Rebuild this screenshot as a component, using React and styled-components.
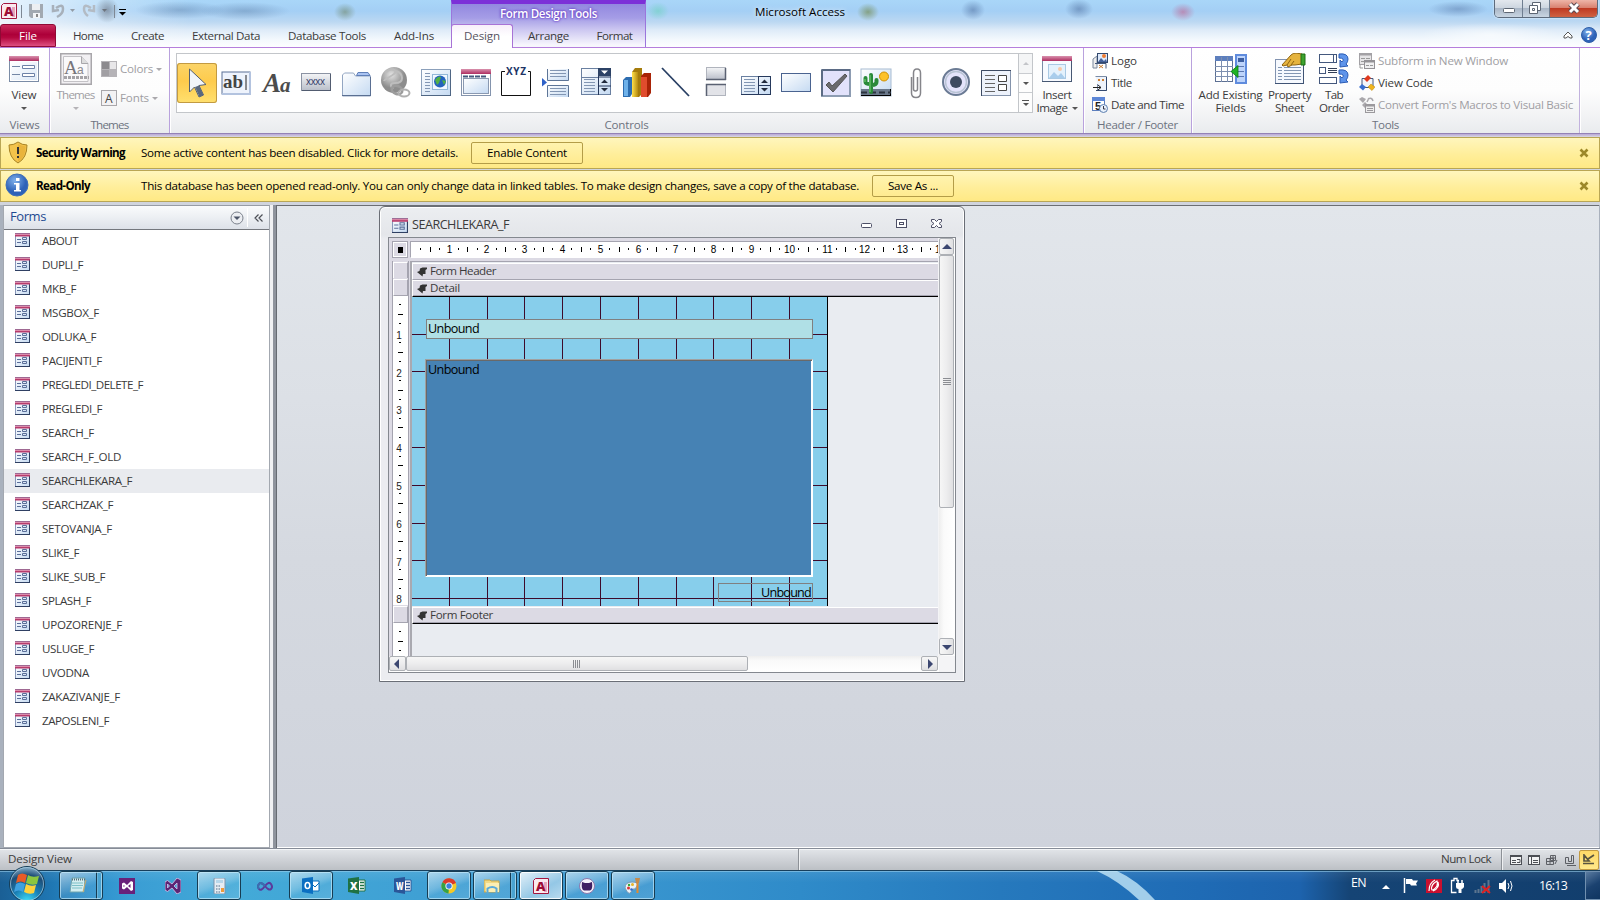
import React, { useLayoutEffect, useRef, useState } from "react";
import styled, { createGlobalStyle, css } from "styled-components";

const Global = createGlobalStyle`
  * { box-sizing: border-box; }
  body { margin: 0; overflow: hidden; }
  svg { display: block; flex: none; }
`;

const ui = css`
  font-family: "Open Sans", "Noto Sans", sans-serif;
  font-size: 11.6px;
  line-height: 13px;
`;

const Screen = styled.div`
  ${ui}
  width: 1600px;
  height: 900px;
  display: flex;
  flex-direction: column;
  overflow: hidden;
  color: #3b3b3b;
  background: #d0d4dd;
`;

/* Text set to a given measure by spreading the difference over its letters */
const FitSpan = styled.span`
  display: inline-block;
  vertical-align: top;
  white-space: pre;
  flex: none;
  line-height: 11px;
  padding-bottom: 2px;
`;
function Fit({ w, children }) {
  const ref = useRef(null);
  const [ls, setLs] = useState(0);
  useLayoutEffect(() => {
    const natural = ref.current.getBoundingClientRect().width;
    setLs((w - natural) / children.length);
  }, [w, children]);
  return (
    <FitSpan ref={ref} style={{ letterSpacing: ls }}>
      {children}
    </FitSpan>
  );
}

/* ---------- title bar and tabs ---------- */
const TopArea = styled.header`
  position: relative;
  height: 48px;
  flex: none;
  border-bottom: 1px solid #b57fdc;
  background:
    radial-gradient(ellipse 70px 12px at 1490px 35px, rgba(255,255,255,.6), transparent),
    radial-gradient(ellipse 11px 9px at 345px 12px, rgba(100,120,80,.5), transparent),
    radial-gradient(ellipse 45px 9px at 180px 10px, rgba(60,90,130,.3), transparent),
    radial-gradient(ellipse 45px 9px at 245px 11px, rgba(60,90,130,.3), transparent),
    radial-gradient(ellipse 11px 9px at 658px 11px, rgba(110,210,190,.6), transparent),
    radial-gradient(ellipse 11px 9px at 868px 12px, rgba(110,130,60,.6), transparent),
    radial-gradient(ellipse 12px 10px at 973px 10px, rgba(60,90,140,.45), transparent),
    radial-gradient(ellipse 14px 10px at 1079px 9px, rgba(60,90,140,.45), transparent),
    radial-gradient(ellipse 12px 9px at 1183px 12px, rgba(200,60,110,.45), transparent),
    radial-gradient(ellipse 30px 8px at 1458px 9px, rgba(70,100,150,.4), transparent),
    linear-gradient(90deg, rgba(255,255,255,.75) 0, rgba(255,255,255,.35) 90px, transparent 190px),
    linear-gradient(#a9d6f8 0, #a4cff5 11px, #bcd8f2 22px, #deebf8 30px, #f4f9fd 40px, #fdfeff 47px);
`;
const TitleRow = styled.div`
  height: 24px;
  display: flex;
  align-items: flex-start;
  justify-content: space-between;
`;
const QuickBar = styled.div`
  display: flex;
  padding-left: 1px;
`;
const AppTitle = styled.div`
  position: absolute;
  left: 755px;
  top: 6px;
  color: #000;
  text-shadow: 0 0 5px #fff;
`;
const WindowButtons = styled.div`
  display: flex;
  width: 104px;
  height: 18px;
  margin-right: 2px;
  border: 1px solid #5d6b7c;
  border-top: 0;
  border-radius: 0 0 5px 5px;
  overflow: hidden;
  box-shadow: 0 0 2px #fff;
`;
const WinBtn = styled.div`
  width: ${(p) => p.$w}px;
  border-right: 1px solid #6f7e90;
  background: linear-gradient(#e3e8ee, #ccd5df 48%, #aab7c7 50%, #c9d5e2);
  ${(p) => p.$close && css`border: 0; background: linear-gradient(#eeb5a8, #d98270 45%, #bf3a22 50%, #cf6242);`}
`;
const TabRow = styled.nav`
  display: flex;
  height: 24px;
  position: relative;
`;
const Tab = styled.div`
  width: ${(p) => p.$w}px;
  display: flex;
  justify-content: center;
  padding-top: 6px;
  color: #3b3b3b;
  ${(p) => p.$file && css`
    color: #fff;
    height: 23px;
    border: 1px solid #8f0a35;
    border-radius: 3px 3px 0 0;
    padding-top: 5px;
    background: linear-gradient(#c92a5c, #ad0039 45%, #b4083f 60%, #de4f80);
  `}
  ${(p) => p.$active && css`
    border: 1px solid #a873d6;
    border-bottom: 0;
    border-radius: 3px 3px 0 0;
    padding-top: 5px;
    color: #595463;
    background: linear-gradient(#f7effa, #fff 50%);
  `}
`;
const ContextBand = styled.div`
  position: absolute;
  left: 451px;
  top: 0;
  width: 195px;
  height: 47px;
  display: flex;
  justify-content: center;
  padding-top: 4px;
  border-top: 4px solid #7c30d8;
  border-left: 1px solid #9b76dc;
  border-right: 1px solid #9b76dc;
  color: #fff;
  font-weight: 600;
  text-shadow: 0 0 3px #5b2fc0, 0 0 2px #7040c8;
  background: linear-gradient(#9288df, #a59de6 14px, #cdc8f1 26px, #f7f6fd 41px);
`;
const TabTools = styled.div`
  margin-left: auto;
  display: flex;
  gap: 8px;
  padding: 3px 3px 0 0;
`;

/* ---------- ribbon ---------- */
const Ribbon = styled.section`
  height: 85px;
  flex: none;
  display: flex;
  background: linear-gradient(#fff, #fdfdfd 50%, #f0f1f3 85%, #e9ebee);
`;
const RibbonEdge = styled.div`
  height: 4px;
  flex: none;
  background: linear-gradient(#9382b6 0, #9382b6 1px, #b9a8d8 1px, #cdc6dc 3px, #dcdce4);
`;
const Group = styled.div`
  width: ${(p) => p.$w}px;
  display: flex;
  flex-direction: column;
  border-right: 1px solid #b9a2dd;
  box-shadow: 1px 0 0 #fff;
  ${(p) => p.$last && css`border-right-color: #c2b2de;`}
`;
const GroupBody = styled.div`
  height: 71px;
  display: flex;
  padding-left: ${(p) => p.$pad || 0}px;
`;
const GroupName = styled.div`
  display: flex;
  justify-content: center;
  color: #6d7380;
`;
const BigButton = styled.div`
  width: ${(p) => p.$w}px;
  display: flex;
  flex-direction: column;
  align-items: center;
  padding-top: ${(p) => p.$top ?? 7}px;
  color: ${(p) => (p.$off ? "#a09ea3" : "#3b3b3b")};
`;
const BigText = styled.div`
  display: flex;
  align-items: center;
  flex-direction: column;
  margin-top: ${(p) => p.$mt ?? 6}px;
`;
const Line = styled.div`
  display: flex;
  align-items: center;
  gap: 4px;
`;
const Caret = styled.i`
  width: 0;
  height: 0;
  margin-top: ${(p) => p.$mt || 0}px;
  border: 3px solid transparent;
  border-bottom: 0;
  border-top-color: ${(p) => p.$c || "#555"};
`;
const SmallList = styled.div`
  display: flex;
  flex-direction: column;
  padding: ${(p) => p.$pad};
  gap: ${(p) => p.$gap}px;
`;
const SmallItem = styled.div`
  height: 16px;
  display: flex;
  align-items: center;
  gap: 3px;
  color: ${(p) => (p.$off ? "#a09ea3" : "#3b3b3b")};
`;
const Gallery = styled.div`
  width: 857px;
  height: 60px;
  margin-top: 5px;
  display: flex;
  border: 1px solid #c3c6ca;
  background: #fff;
`;
const GalleryCell = styled.div`
  width: 40px;
  height: 40px;
  margin-top: 9px;
  flex: none;
  ${(p) => p.$on && css`
    border-radius: 3px;
    box-shadow: inset 0 0 0 1px #c29a42;
    background: linear-gradient(#fbd469, #fecb4c 45%, #ffe06f);
  `}
`;
const GalleryScroll = styled.div`
  margin-left: auto;
  width: 14px;
  display: flex;
  flex-direction: column;
  border-left: 1px solid #c3c6ca;
`;
const ScrollStep = styled.div`
  flex: 1;
  display: flex;
  flex-direction: column;
  align-items: center;
  justify-content: center;
  gap: 2px;
  border-bottom: 1px solid #c9ccd0;
  background: ${(p) => (p.$off ? "#f4f5f6" : "#fdfdfd")};
  &:last-child { border-bottom: 0; }
`;
const Bar = styled.i`
  width: 7px;
  height: 1px;
  background: #555;
`;

/* ---------- message bars ---------- */
const Message = styled.div`
  height: 32px;
  flex: none;
  display: flex;
  align-items: center;
  margin-bottom: ${(p) => p.$mb}px;
  padding-right: 10px;
  color: #000;
  border: 1px solid #b9a654;
  background: linear-gradient(#fff6bd, #ffee9a 55%, #ffe985);
`;
const MessageIcon = styled.div`
  width: 35px;
  padding-left: 4px;
`;
const MessageTitle = styled.div`
  width: 105px;
  font-weight: 700;
`;
const MessageButton = styled.div`
  height: 22px;
  width: ${(p) => p.$w}px;
  margin-left: 13px;
  display: flex;
  align-items: center;
  justify-content: center;
  border: 1px solid #b49d48;
  border-radius: 2px;
  background: linear-gradient(#fff3ae, #ffeb90);
`;
const Dismiss = styled.div`
  margin-left: auto;
`;

/* ---------- work area ---------- */
const Work = styled.main`
  height: 643px;
  flex: none;
  display: flex;
  background: #a9b1bd;
`;
const NavPane = styled.aside`
  width: 267px;
  margin-left: 3px;
  display: flex;
  flex-direction: column;
  border: 1px solid #a3a8b0;
  border-top-color: #979ca5;
  background: #fff;
`;
const NavHead = styled.div`
  height: 24px;
  flex: none;
  display: flex;
  align-items: center;
  padding: 0 5px 0 6px;
  font-size: 13px;
  color: #1e4a91;
  border-bottom: 1px solid #74777d;
  background: linear-gradient(#fafbfc, #eceff3 50%, #dde1e8);
`;
const HeadTools = styled.div`
  margin-left: auto;
  display: flex;
  align-items: center;
`;
const HeadRule = styled.i`
  width: 1px;
  height: 19px;
  margin: 0 6px 0 3px;
  background: #fff;
`;
const NavList = styled.div`
  display: flex;
  flex-direction: column;
`;
const NavRow = styled.div`
  height: 24px;
  flex: none;
  display: flex;
  align-items: center;
  gap: 12px;
  padding-left: 11px;
  background: ${(p) => (p.$on ? "#e9ebef" : "transparent")};
  svg { margin-bottom: 3px; }
  &:first-child { height: 23px; }
`;
const Splitter = styled.div`
  width: 7px;
  border-right: 1px solid #666b72;
  background: linear-gradient(90deg, #f0f1f3 3px, #8f949d 3px);
`;
const Canvas = styled.div`
  position: relative;
  width: 1322px;
  border-top: 1px solid #6b6e73;
  border-bottom: 1px solid #fff;
  background: linear-gradient(#e2e6eb, #dce0e6 30%, #d5d9e0 55%, #cfd3dc);
`;
const FormWindow = styled.div`
  position: absolute;
  left: 102px;
  top: 0;
  width: 586px;
  height: 476px;
  border: 1px solid #6a6e76;
  border-radius: 6px 6px 0 0;
  padding: 0 8px 8px;
  display: flex;
  flex-direction: column;
  box-shadow: inset 0 0 0 1px #fff;
  background: linear-gradient(#eceef1, #e4e6ea 28px, #ebecf0 32px);
`;
const FormTitle = styled.div`
  height: 30px;
  flex: none;
  display: flex;
  align-items: center;
  gap: 4px;
  padding: 6px 13px 0 4px;
  font-size: 12.6px;
`;
const FormButtons = styled.div`
  margin-left: auto;
  margin-top: -2px;
`;
const Frame = styled.div`
  width: 568px;
  height: 436px;
  border: 1px solid #84888f;
  display: grid;
  grid-template-columns: 550px 16px;
  grid-template-rows: 418px 16px;
  background: #f4f4f6;
`;
const Designer = styled.div`
  display: grid;
  overflow: hidden;
  margin-right: 1px;
  grid-template-columns: 23px 526px;
  grid-template-rows: 23px 395px;
  background: #dcdae4;
`;
const Corner = styled.div`
  margin: 3px 0 3px 3px;
  width: 16px;
  height: 17px;
  padding: 5px 0 0 5px;
  border: 1px solid #a5a4b0;
  box-shadow: inset 0 0 0 1px #fff;
`;
const CornerDot = styled.i`
  display: block;
  width: 5px;
  height: 6px;
  background: #000;
`;
const RulerTop = styled.div`
  margin: 3px 0 3px -2px;
  height: 17px;
  border: 1px solid #a5a4b0;
  border-bottom-color: #fff;
  border-right: 0;
  background: #fff;
  overflow: hidden;
`;
const RulerSide = styled.div`
  display: flex;
  flex-direction: column;
  margin-left: 3px;
  margin-right: 3px;
  border: solid #a5a4b0;
  border-width: 1px 1px 0 1px;
  background: #fff;
`;
const SectionStub = styled.div`
  height: 17px;
  flex: none;
  border: 1px solid #fff;
  border-right-color: #a5a4b0;
  border-bottom-color: #a5a4b0;
  box-shadow: 0 -1px 0 #dcdae4;
  background: #dcdae4;
`;
const Sections = styled.div`
  border-top: 1px solid #a5a4b0;
  border-left: 2px solid #a9a9b0;
  margin-left: -2px;
  display: flex;
  flex-direction: column;
  background: #e9ecf1;
`;
const SectionBar = styled.div`
  height: 17px;
  flex: none;
  display: flex;
  align-items: center;
  gap: 3px;
  padding-left: 4px;
  border-top: 1px solid #fff;
  border-left: 1px solid #fff;
  border-bottom: 1px solid ${(p) => (p.$open ? "#000" : "#a5a4b0")};
  box-shadow: ${(p) => (p.$open ? "inset 0 -1px 0 #a5a4b0" : "none")};
  margin-top: ${(p) => p.$mt || 0}px;
  background: #dcdae4;
`;
const Detail = styled.div`
  position: relative;
  width: 416px;
  height: 309px;
  flex: none;
  border-right: 1px solid #000;
  background: #87ceeb;
`;
const Control = styled.div`
  position: absolute;
  left: ${(p) => p.$x}px;
  top: ${(p) => p.$y}px;
  width: ${(p) => p.$w}px;
  height: ${(p) => p.$h}px;
  padding: 3px 1px 0;
  font-size: 12.6px;
  color: #000;
  text-align: ${(p) => (p.$right ? "right" : "left")};
  border: 1px solid #808080;
  background: ${(p) => p.$bg || "transparent"};
  ${(p) => p.$sunken && css`
    border: 1px solid;
    border-color: #a0a0a0 #fff #fff #a0a0a0;
    box-shadow: inset 1px 1px 0 #696969, inset -1px -1px 0 #fff;
    padding: 4px 2px 0;
  `}
`;
const VScroll = styled.div`
  display: flex;
  flex-direction: column;
  padding-bottom: 1px;
  background: linear-gradient(90deg, #eee, #fafafa 30%, #fff);
`;
const HScroll = styled.div`
  display: flex;
  padding-right: 1px;
  background: linear-gradient(#eee, #fafafa 30%, #fff);
`;
const ScrollPiece = styled.div`
  width: ${(p) => p.$w}px;
  height: ${(p) => p.$h}px;
  flex: none;
  display: flex;
  align-items: center;
  justify-content: center;
  border: 1px solid #adb0b5;
  border-radius: 2px;
  background: linear-gradient(${(p) => (p.$v ? "90deg" : "180deg")}, #f6f6f6, #ededee 50%, #e0e0e2);
  ${(p) => p.$end && css`margin-top: auto;`}
  ${(p) => p.$endx && css`margin-left: auto;`}
`;

/* ---------- status bar ---------- */
const Status = styled.footer`
  height: 22px;
  flex: none;
  display: flex;
  align-items: center;
  padding: 0 1px 0 8px;
  border-top: 1px solid #868c97;
  box-shadow: inset 0 1px 0 #f4f6f8;
  background: linear-gradient(#e2e5e9, #cfd2d7 50%, #bcc0c5);
`;
const StatusRule = styled.i`
  width: 2px;
  height: 21px;
  border-left: 1px solid #8d9197;
  border-right: 1px solid #eef0f2;
`;
const StatusLeft = styled.div`
  width: 790px;
`;
const StatusRight = styled.div`
  margin-left: auto;
  display: flex;
  align-items: center;
`;
const ViewIcons = styled.div`
  display: flex;
  align-items: center;
  padding-left: 10px;
  gap: 6px;
  ${StatusRule} { margin-right: 1px; }
`;
const ActiveView = styled.div`
  width: 20px;
  height: 20px;
  margin-left: -3px;
  padding: 3px;
  border: 1px solid #c29a42;
  border-radius: 2px;
  background: linear-gradient(#ffd967, #ffe88a);
`;

/* ---------- taskbar ---------- */
const Taskbar = styled.div`
  position: relative;
  height: 30px;
  flex: none;
  display: flex;
  padding-left: 59px;
  border-top: 1px solid #173f5c;
  box-shadow: inset 0 1px 0 rgba(150,205,235,.6);
  background:
    linear-gradient(rgba(255,255,255,.08), transparent 40%),
    linear-gradient(90deg, #1a5f95 0, #1f76b2 50px, #2b8fcb 90px, #3a9dd4 130px, #43aad8 240px, #3fa0d4 420px, #3a97d0 600px, #2f8bc9 800px, #2679bd 1000px, #1f6bb5 1200px, #1d63ad 1300px, #154475 1350px, #123e6d 1600px);
`;
const Orb = styled.div`
  position: absolute;
  left: 8px;
  top: -6px;
`;
const Streak = styled.div`
  position: absolute;
  left: 1075px;
  top: 0;
`;
const Tasks = styled.div`
  display: flex;
  gap: 2px;
`;
const Task = styled.div`
  width: 44px;
  height: 29px;
  display: flex;
  align-items: center;
  justify-content: center;
  padding-right: ${(p) => (p.$stack ? 7 : 0)}px;
  ${(p) => p.$open && css`
    border: 1px solid #173c52;
    border-radius: 3px;
    box-shadow: inset 0 0 0 1px rgba(200,235,250,.65);
    background: linear-gradient(160deg, rgba(255,255,255,.55), rgba(255,255,255,.25) 45%, rgba(255,255,255,.08) 60%, rgba(255,255,255,.12));
  `}
  ${(p) => p.$stack && css`
    background: linear-gradient(90deg, transparent 36px, #173c52 36px, #173c52 37px, #8cc8e6 37px, #4aa3d1 38px), linear-gradient(160deg, rgba(255,255,255,.55), rgba(255,255,255,.1) 60%);
  `}
  ${(p) => p.$active && css`
    background: linear-gradient(150deg, rgba(255,255,255,.85), rgba(255,255,255,.45) 60%, rgba(255,255,255,.65));
    box-shadow: inset 0 0 0 1px rgba(255,255,255,.85);
  `}
`;
const Tray = styled.div`
  margin-left: auto;
  display: flex;
  align-items: center;
  color: #fff;
  font-size: 12.4px;
`;
const Lang = styled.div`
  margin: -4px 15px 0 0;
`;
const Clock = styled.div`
  margin: 2px 18px 0 18px;
`;
const ShowDesktop = styled.div`
  width: 15px;
  height: 29px;
  border: 1px solid #7090b0;
  border-right: 0;
  background: linear-gradient(150deg, #5a7ba0, #1b4270 50%, #0f3560);
`;

/* ---------- drawings ---------- */
const S = ({ w = 16, h = w, vb, children }) => (
  <svg width={w} height={h} viewBox={vb || `0 0 ${w} ${h}`} fill="none">{children}</svg>
);

const Defs = () => (
  <svg width="0" height="0" style={{ position: "absolute" }}>
    <defs>
      <linearGradient id="sheet" x1="0" y1="0" x2="1" y2="1"><stop offset="0" stopColor="#fff" /><stop offset="1" stopColor="#c5daf2" /></linearGradient>
      <linearGradient id="btn" x1="0" y1="0" x2="0" y2="1"><stop offset="0" stopColor="#f4f5f7" /><stop offset="1" stopColor="#b9bec9" /></linearGradient>
      <linearGradient id="rose" x1="0" y1="0" x2="0" y2="1"><stop offset="0" stopColor="#d992ae" /><stop offset="1" stopColor="#ae2d60" /></linearGradient>
      <radialGradient id="blueball" cx=".4" cy=".3"><stop offset="0" stopColor="#7fb0ea" /><stop offset="1" stopColor="#2e62b8" /></radialGradient>
      <radialGradient id="greyball" cx=".4" cy=".3"><stop offset="0" stopColor="#e3e3e3" /><stop offset="1" stopColor="#8d8d8d" /></radialGradient>
      <radialGradient id="smudge"><stop offset="0" stopColor="#5b6370" stopOpacity=".55" /><stop offset="1" stopColor="#5b6370" stopOpacity="0" /></radialGradient>
      <radialGradient id="orb" cx=".5" cy="1" r="1"><stop offset="0" stopColor="#3fe0fa" /><stop offset=".4" stopColor="#1a7fb5" /><stop offset=".75" stopColor="#1e4d77" /><stop offset="1" stopColor="#8fb6cf" /></radialGradient>
      <linearGradient id="gold" x1="0" y1="0" x2="1" y2="0"><stop offset="0" stopColor="#ffe04a" /><stop offset="1" stopColor="#b48a10" /></linearGradient>
    </defs>
  </svg>
);

const FormIcon = ({ w = 15, h = 14 }) => (
  <svg width={w} height={h} viewBox="0 0 15 14" fill="none">
    <rect x=".5" y=".5" width="14" height="13" fill="url(#sheet)" stroke="#8796b8" />
    <path d="M0 13.5h15M14.5 3v11" stroke="#2f4063" />
    <path d="M0 .5h15v3H0z" fill="#b73b6c" /><path d="M0 1.5h15" stroke="#dc8cab" />
    <path d="M2 6.500h4M2 9.500h4" stroke="#5b6f99" />
    <path d="M7.500 4.500h4v2h-4zM7.500 8.500h4v2h-4z" stroke="#5b6f99" />
  </svg>
);

const ViewBig = () => (
  <S w={32} h={28}>
    <rect x="1.5" y="1.5" width="29" height="25" fill="#fff" stroke="#7b8ca6" />
    <rect x="1" y="1" width="30" height="5" fill="url(#rose)" />
    <rect x="3" y="7" width="26" height="18" fill="url(#sheet)" opacity=".6" />
    <path d="M4 11.500h8M4 19.500h8" stroke="#7386a5" />
    <path d="M14.500 10.500h12v3h-12zM14.500 18.500h12v3h-12z" stroke="#6c82a8" fill="#fff" />
  </S>
);

const ListLines = ({ x, y, n, w = 11, c = "#8296b3", s = 3 }) =>
  Array.from({ length: n }, (_, i) => <path key={i} d={`M${x} ${y + i * s + 0.5}h${w}`} stroke={c} />);

const controls = [
  <g key="cursor"><path d="M12.500 6v23l5-5 4.500 10 4.500-2-4.500-9.500 7-1z" fill="#f2f5fa" stroke="#57616f" /><path d="M18 24l4.500 10 4-2-4.500-9.500z" fill="#59687f" /></g>,
  <g key="textbox"><rect x="5" y="9" width="28" height="22" fill="#eef3fc" stroke="#5a7096" /><path d="M33 9v22M5 31h29" stroke="#b3c3df" strokeWidth="2" /><text x="6" y="25" fontFamily="Liberation Serif" fontWeight="700" fontSize="19" fill="#444" textLength="20" lengthAdjust="spacingAndGlyphs">ab</text><path d="M29 12v15" stroke="#222" /></g>,
  <g key="label" fontFamily="Liberation Serif" fontWeight="700" fontStyle="italic" fill="#4c4c4c"><text x="6" y="29" fontSize="27">A</text><text x="23" y="29" fontSize="21">a</text></g>,
  <g key="button"><rect x="4.500" y="10.500" width="29" height="17" fill="url(#btn)" stroke="#8b93a3" /><path d="M5 27.500h29M33.500 11v17" stroke="#525c70" /><text x="9" y="22" fontFamily="Liberation Sans" fontSize="10" fill="#35406a" textLength="19">xxxx</text></g>,
  <g key="tab"><path d="M5.500 33V12l2-2h9l2 3h15v20z" fill="url(#sheet)" stroke="#93a6c2" /><path d="M19.500 12.500l1.500-3h10l2 3z" fill="#a9c3f2" stroke="#5f7fb8" /><path d="M5 32.500h29M33.500 14v19" stroke="#5a6f92" /></g>,
  <g key="link"><circle cx="17" cy="17" r="13" fill="url(#greyball)" /><path d="M8 10q5-5 9-3t-3 6-7 5M19 8q6 2 6 7t-7 5-2 6" stroke="#bdbdbd" strokeWidth="2" /><ellipse cx="20" cy="27" rx="5.500" ry="4" stroke="#9c9c9c" strokeWidth="2.500" transform="rotate(20 20 27)" /><ellipse cx="27" cy="30" rx="5.500" ry="3.500" stroke="#b0b0b0" strokeWidth="2" /></g>,
  <g key="web"><rect x="4.500" y="6.500" width="29" height="26" fill="url(#sheet)" stroke="#8ba0bb" /><path d="M4 32.500h30M33.500 7v26" stroke="#4f6684" /><ListLines x={8} y={10} n={7} w={5} /><rect x="15.500" y="11.500" width="15" height="15" fill="#f2f8ff" stroke="#92b8d8" /><circle cx="23" cy="18.500" r="6" fill="#2463bd" /><path d="M18 17q3-5 6-3l-2 6-2 2zM25 17l4 1-2 4z" fill="#52b144" /></g>,
  <g key="nav"><rect x="4.500" y="6.500" width="29" height="26" fill="#fff" stroke="#8494ad" /><rect x="4" y="6" width="30" height="5" fill="url(#rose)" /><path d="M6 13.500h24" stroke="#44597d" strokeWidth="2" strokeDasharray="5 1" /><rect x="6.500" y="15.500" width="25" height="15" fill="url(#sheet)" stroke="#8a99b1" /></g>,
  <g key="group"><path d="M8 8.500H4.500v24h29v-24H31" stroke="#111" /><text x="9" y="12" fontFamily="Open Sans" fontWeight="700" fontSize="10" fill="#203465" textLength="20">XYZ</text></g>,
  <g key="break"><path d="M10.500 6v12h21V6z" fill="url(#sheet)" /><path d="M10.500 6v11.500h21V6" stroke="#5d7597" /><ListLines x={13} y={7} n={3} w={16} /><path d="M10.500 34V22.500h21V34" fill="url(#sheet)" stroke="#5d7597" /><ListLines x={13} y={25} n={3} w={16} /><path d="M5 15l5 4.500-5 4z" fill="#2f62c8" /></g>,
  <g key="combo"><rect x="4.500" y="5.500" width="29" height="26" fill="url(#sheet)" stroke="#6a80a1" /><path d="M21.500 6v26M21 14h13M21 23h13" stroke="#26395c" /><rect x="21" y="5" width="13" height="8" fill="#2c4266" /><path d="M24 7.500h7l-3.500 3.500z" fill="#fff" /><path d="M24 20h7l-3.500-3.500zM24 25h7l-3.500 3.500z" fill="#222b3d" /><path d="M4 14.500h17" stroke="#6a80a1" /><ListLines x={7} y={16} n={5} /></g>,
  <g key="chart"><path d="M6 17l3-3h6v17l-2 3H6z" fill="#2d6db0" /><path d="M7 17h4v16H7z" fill="#6fb2ea" /><path d="M15 9l3-4h7v26l-3 3h-7z" fill="#a57c0c" /><path d="M15 9h6v25h-6z" fill="url(#gold)" /><path d="M24 13l3-3h7v20l-3 4h-7z" fill="#a92307" /><path d="M24 14h6v20h-6z" fill="#e04c2d" /></g>,
  <path key="line" d="M5 5l27 28" stroke="#283f63" strokeWidth="1.800" />,
  <g key="toggle"><rect x="9.500" y="4.500" width="19" height="12" fill="url(#btn)" stroke="#b0b4bd" /><path d="M9 16.500h20M28.500 5v12" stroke="#5a6172" strokeWidth="1.500" /><rect x="9.500" y="21.500" width="19" height="11" fill="#e2e3e8" stroke="#b0b4bd" /><path d="M9.500 33V21.500H29" stroke="#5a6172" strokeWidth="1.500" /></g>,
  <g key="listbox"><rect x="4.500" y="13.500" width="29" height="18" fill="url(#sheet)" stroke="#6a80a1" /><path d="M21.500 13v19M21 22.500h13M4 31.500h30M33.500 13v19M21 13.500h13" stroke="#26395c" /><path d="M24 20h7l-3.500-3.500zM24 25h7l-3.500 3.500z" fill="#222b3d" /><ListLines x={7} y={16} n={5} /></g>,
  <g key="rect"><rect x="4.500" y="10.500" width="29" height="18" fill="url(#sheet)" stroke="#4a6390" /></g>,
  <g key="check"><rect x="5" y="7" width="28" height="26" fill="#e2e2fb" stroke="#8d9cb2" strokeWidth="2" /><path d="M5 7h28M5 7v26" stroke="#5b6b85" strokeWidth="2" /><path d="M9 22l3-3 3 4L28 11l2 2-14 16z" fill="#6a6a6e" stroke="#555" /></g>,
  <g key="cactus"><rect x="4" y="6" width="30" height="27" fill="url(#sheet)" stroke="#a8bcd2" /><path d="M4 26h30v7H4z" fill="#6a788b" /><path d="M4 32.500h30M33.500 26v7" stroke="#000" /><path d="M4 29.500h30" stroke="#2c3440" strokeWidth="2" strokeDasharray="6 3" /><circle cx="27" cy="13.500" r="4.500" fill="#fdc22c" stroke="#cf9208" /><path d="M14 29V12M8.500 15v4q0 2 5 2M19.500 17v2q0 3-5 3" stroke="#2a8a3a" strokeWidth="4" strokeLinecap="round" /><path d="M13 29V12M8 16v3" stroke="#5fc063" strokeWidth="1.500" /></g>,
  <g key="clip" stroke="#85858a" strokeWidth="1.500"><path d="M14.500 14v16q0 4.500 4.500 4.500t4.500-4.500V10q0-4-3.500-4t-3.500 4v16q0 2 2 2t2-2V14" /></g>,
  <g key="radio"><circle cx="19" cy="19" r="13" fill="#e4e3fb" stroke="#6b7b94" strokeWidth="2" /><circle cx="19" cy="19" r="10.500" stroke="#b9c4d4" strokeWidth="1.500" /><circle cx="19" cy="19" r="6" fill="#3e4a60" /></g>,
  <g key="subform"><rect x="4.500" y="7.500" width="29" height="25" fill="#edf2fb" stroke="#8493ab" /><path d="M4.500 33V7.500H34" stroke="#3c4a63" /><ListLines x={8} y={12} n={5} w={10} c="#666" s={4} /><path d="M21.500 12.500h8v6h-8zM21.500 21.500h8v6h-8z" fill="#fff" stroke="#444" /></g>,
];

const ThemesBig = () => (
  <S w={32}>
    <rect x=".75" y=".75" width="30.500" height="30.500" fill="#f2f0f3" stroke="#a9a7ab" strokeWidth="1.500" />
    <path d="M3.500 28.500v-25h18l6.500 7v18z" fill="#faf9fa" stroke="#c4c2c6" /><path d="M21.500 3.500v7H28" fill="#ddd" stroke="#a9a7ab" />
    <text x="4" y="21" fontFamily="Liberation Serif" fontSize="19" fill="#77757a">A</text><text x="17" y="21" fontFamily="Liberation Sans" fontSize="12" fill="#8a888d">a</text>
    <path d="M4 24.500h25" stroke="#a5a3a7" strokeWidth="3" strokeDasharray="3 1" />
  </S>
);
const InsertImageBig = () => (
  <S w={32} h={28}>
    <rect x="1.500" y="1.500" width="29" height="25" fill="#f7faff" stroke="#7b8ca6" /><path d="M1 26.500h30M30.500 5v22" stroke="#475873" />
    <rect x="1" y="1" width="30" height="5" fill="url(#rose)" /><rect x="7.500" y="9.500" width="17" height="14" fill="#e4f1fc" stroke="#a9c9e4" />
    <path d="M8 23l5-6 4 4 3-3 4 5z" fill="#a9cdec" /><circle cx="19" cy="14" r="2" fill="#f8c9a8" />
  </S>
);
const AddFieldsBig = () => (
  <S w={32}>
    <rect x=".5" y="3.500" width="17" height="25" fill="#fff" stroke="#5c6f92" /><path d="M0 3h18v5H0z" fill="#5d7fbd" />
    <path d="M0 13.500h18M0 18.500h18M0 23.500h18M6.500 4v25M12.500 4v25" stroke="#7d8fb0" />
    <rect x="21" y="2" width="10" height="28" fill="#bdd4fb" stroke="#5f8bdd" strokeWidth="2" /><path d="M23 5h6v4h-6z" fill="#3d5fa0" /><path d="M23 13.500h6M23 18.500h6M23 23.500h6" stroke="#5c78b0" />
    <path d="M16 18.500l7-6v12z" fill="#1fb324" stroke="#0d7a12" strokeWidth=".8" />
  </S>
);
const PropertyBig = () => (
  <S w={32}>
    <rect x="1.500" y="6.500" width="28" height="24" fill="#f6f9fe" stroke="#8293b0" /><path d="M1 30.500h29M29.500 10v21" stroke="#3f5374" />
    <ListLines x={4} y={14} n={5} w={4} /><ListLines x={10} y={14} n={5} w={17} />
    <path d="M8 12l9-10q2-2 5-2l6 1v10l-7 1-3 0-4 2-1-2-4 1z" fill="#e5b33e" stroke="#8f640f" /><path d="M17 6l-4 6M20 8l-3 4" stroke="#8f640f" />
    <path d="M27 1h4v11h-4z" fill="#3da32e" stroke="#1f6e14" />
  </S>
);
const TabOrderBig = () => (
  <S w={32}>
    <rect x="1.500" y="1.500" width="17" height="8" fill="#fff" stroke="#44587d" /><path d="M15.500 1v9" stroke="#44587d" />
    <rect x="1.500" y="14.500" width="6" height="6" fill="#fff" stroke="#44587d" /><path d="M10 15.500h9M10 19.500h9M10 17.500h9" stroke="#333f57" />
    <rect x="1.500" y="24.500" width="17" height="6" fill="#fff" stroke="#44587d" />
    {[0, 16].map((y) => <path key={y} transform={`translate(0 ${y})`} d="M21 1q9-1 9 5 0 3-2 5l2 2-8 1 0-7 2 2q2-2 1-3-1-1-4-1z" fill="#5e94ea" stroke="#2c5cb4" />)}
  </S>
);

const LogoIcon = () => <S><path d="M1 15V6l4-3v12z" fill="#eee" stroke="#7b889c" /><rect x="5" y="0" width="11" height="10" fill="#33496f" /><path d="M6 9V1h9v8z" fill="#dfeafa" /><path d="M6 9l3-4 3 3 2-2 1 3z" fill="#44619a" /><circle cx="12" cy="3" r="2" fill="#f07c32" /><path d="M3 10.500h11v5" stroke="#44587d" /><path d="M7 12l4 3m0-3l-4 3" stroke="#c97a2e" /></S>;
const TitleIcon = () => <S><path d="M3.500 1.500h11v14h-9V9" fill="#eef3fb" stroke="#7b8ca6" /><path d="M14.500 2v13.500H4" stroke="#33496f" /><path d="M6 4l2 2m0-2L6 6m4-2l2 2m0-2l-2 2" stroke="#d08030" /><path d="M1 12.500h8M6 10l3 2.500L6 15" stroke="#222" /></S>;
const DateIcon = () => <S><rect x=".5" y=".5" width="12" height="13" fill="#fff" stroke="#5d7fbd" /><path d="M0 0h13v4H0z" fill="#5c86d6" /><text x="3" y="13" fontFamily="Liberation Sans" fontWeight="700" fontSize="11" fill="#222">5</text><circle cx="11.500" cy="11.500" r="4" fill="#e8f1fc" stroke="#5d7fae" /><path d="M11.500 9v3h2" stroke="#334" /></S>;
const SubformIcon = () => <S><rect x=".5" y=".5" width="12" height="11" fill="#e5e4e6" stroke="#a3a1a5" /><path d="M0 1.500h13" stroke="#a3a1a5" strokeWidth="2" /><path d="M2 5.500h4M2 8.500h4M7 5.500h4" stroke="#999" /><rect x="5.500" y="7.500" width="10" height="8" fill="#efeff0" stroke="#949296" /><path d="M5 8.500h11" stroke="#949296" strokeWidth="2" /><path d="M7 12.500h3M11 12.500h3M1 12v3h3" stroke="#999" /></S>;
const CodeIcon = () => <S><path d="M3 3.500h11v9H3z" fill="#f4f6fb" stroke="#44587d" /><path d="M5 4l4-4 3 3-4 4z" fill="#e03a1f" /><path d="M0 12l3-3 4 3-3 3.500z" fill="#3a6fd0" /><path d="M9 12l3-3 4 3-3 3.500z" fill="#f0b41c" stroke="#b98308" strokeWidth=".5" /></S>;
const ConvertIcon = () => <S><path d="M0 2l3-2 4 2-3 4zM3 8l3-3 3 3-3 3z" fill="#aaa8ac" /><path d="M9 2q4-2 5 2M8 5l2-4" stroke="#aaa8ac" strokeWidth="1.500" /><rect x="6.500" y="7.500" width="9" height="8" fill="#eee" stroke="#9b999d" /><path d="M6 8.500h10" stroke="#9b999d" strokeWidth="2" /><path d="M8 11.500h6M8 13.500h6" stroke="#9b999d" /></S>;
const ColorsIcon = () => <S><path d="M0 0h16v16H0z" fill="#b5b3b7" /><path d="M1 1h7v7H1z" fill="#8c8a8e" /><path d="M9 1h6v7H9z" fill="#e8e7e9" /><path d="M1 9h7v6H1z" fill="#a19fa3" /></S>;
const FontsIcon = () => <S><rect x=".5" y=".5" width="15" height="15" fill="#f3f2f4" stroke="#a9a7ab" /><text x="4" y="12.500" fontFamily="Open Sans" fontSize="12" fill="#444">A</text></S>;

const AccessLogo = () => <S><path d="M.5 2.500l2-2h13v15H.5z" fill="#fbe9ef" stroke="#a3163f" /><path d="M11 4h3v10h-3z" fill="#e8a5ba" /><text x="3" y="13" fontFamily="Open Sans" fontWeight="800" fontSize="13" fill="#9d0c36">A</text></S>;
const QuickIcons = () => (
  <S w={130} h={24}>
    <ellipse cx="106" cy="10" rx="12" ry="13" fill="url(#smudge)" />
    <g transform="translate(0 3)"><AccessLogo /></g>
    <path d="M20.500 5v13M113.500 5v13" stroke="#7e8894" />
    <path d="M28 4h14v14H30l-2-2z" fill="#a2a9b1" /><path d="M31 4h8v6h-8z" fill="#eceff2" /><path d="M32 13h7v5h-7z" fill="#f3f5f7" /><path d="M35 14h2v3h-2z" fill="#888" />
    <path d="M55 8q7-5 7 1 0 5-6 8M52 5l0 6 6-1" stroke="#a7b0ba" strokeWidth="2.500" />
    <path d="M69 9h5l-2.500 3z" fill="#929ba6" />
    <path d="M90 8q-7-5-7 1 0 4 4 7M93 5v6l-6-1" stroke="#b3bbc4" strokeWidth="2.500" />
    <path d="M101 9h5l-2.500 3z" fill="#6d747d" />
    <path d="M118 9.500h7" stroke="#000" /><path d="M118 12h7l-3.500 3.500z" fill="#000" />
  </S>
);
const MinGlyph = () => <S w={28} h={17}><rect x="8.500" y="8.500" width="11" height="4" rx="1" fill="#fff" stroke="#5d6673" /></S>;
const RestoreGlyph = () => <S w={26} h={17}><path d="M9.500 2.500h8v8h-8z" fill="#fff" stroke="#5d6673" /><path d="M6.500 5.500h8v8h-8z" fill="#fff" stroke="#5d6673" /><path d="M9.500 8.500h2v2h-2z" stroke="#5d6673" /></S>;
const CloseGlyph = () => <S w={47} h={17}><path d="M20 4l8 8m0-8l-8 8" stroke="#5c4a50" strokeWidth="5" /><path d="M20 4l8 8m0-8l-8 8" stroke="#fff" strokeWidth="3" /></S>;

const CloseX = () => <S w={10} h={10}><path d="M1.500 1.500l7 7m0-7l-7 7" stroke="#9c882a" strokeWidth="2.600" /></S>;
const Shield = () => <S w={26} h={26}><path d="M13 2q4 3 9 3 0 13-9 18Q4 18 4 5q5 0 9-3z" fill="#f3c34b" stroke="#a98324" /><path d="M13 4q4 2 7.500 2.500 0 11-7.500 15z" fill="#e0a62e" opacity=".5" /><path d="M13 7v7" stroke="#333" strokeWidth="2" /><path d="M13 16v2" stroke="#333" strokeWidth="2" /></S>;
const Info = () => <S w={26} h={26}><circle cx="12" cy="12" r="11" fill="url(#blueball)" stroke="#4070b8" /><path d="M11 5h3.500v3H11zM9 10h5.500v7H16v1.500H9V17h2v-5.500H9z" fill="#fff" /></S>;

const CM = 37.8;
const TopRuler = () => (
  <svg width="528" height="15" viewBox="411 242 528 15">
    {Array.from({ length: 56 }, (_, i) => i + 1).map((q) => {
      const x = Math.round(410.700 + (q * CM) / 4);
      if (q % 4 === 0) return <text key={q} x={x + 0.500} y="253" textAnchor="middle" fontFamily="Liberation Sans" fontSize="10" fill="#000">{q / 4}</text>;
      return q % 4 === 2 ? <rect key={q} x={x} y="247" width="1" height="5" /> : <rect key={q} x={x} y="248" width="1" height="2" />;
    })}
  </svg>
);
const SideRuler = ({ h, max }) => (
  <svg width="14" height={h} viewBox={`393 0 14 ${h}`}>
    {Array.from({ length: max }, (_, i) => i + 1).map((q) => {
      const y = Math.round((q * CM) / 4);
      if (q % 4 === 0) return <text key={q} x="399" y={y + 5} textAnchor="middle" fontFamily="Liberation Sans" fontSize="10" fill="#222">{q / 4}</text>;
      return q % 4 === 2 ? <rect key={q} x="398" y={y - 1} width="5" height="1" /> : <rect key={q} x="399" y={y - 1} width="2" height="1" />;
    })}
  </svg>
);
const Grid = () => (
  <svg width="415" height="309" shapeRendering="crispEdges">
    {Array.from({ length: 10 }, (_, i) => <rect key={i} x={Math.round(-1 + (i + 1) * CM)} y="0" width="1" height="309" fill="#3e0a2a" />)}
    {Array.from({ length: 8 }, (_, i) => <rect key={i} x="0" y={Math.round(-1.200 + (i + 1) * CM)} width="415" height="1" fill="#3e0a2a" />)}
  </svg>
);
const SectionArrow = () => <S w={10} h={10}><path d="M3 1.500L5.500 .5H10v1.500L8.500 3v4H6L5.500 9.500 0 5l2.500-1z" fill="#333" /></S>;
const Arrow = ({ d }) => <S w={10} h={10}><path d={d} fill="#3c4770" /></S>;
const Grip = ({ v }) => <S w={8} h={8}><path d={v ? "M0 .5h8M0 2.500h8M0 4.500h8M0 6.500h8" : "M.5 0v8M2.500 0v8M4.500 0v8M6.500 0v8"} stroke="#8b8d92" /></S>;

const forms = [
  ["ABOUT", 36], ["DUPLI_F", 41], ["MKB_F", 34], ["MSGBOX_F", 57], ["ODLUKA_F", 54], ["PACIJENTI_F", 60], ["PREGLEDI_DELETE_F", 101], ["PREGLEDI_F", 60],
  ["SEARCH_F", 52], ["SEARCH_F_OLD", 79], ["SEARCHLEKARA_F", 90], ["SEARCHZAK_F", 71], ["SETOVANJA_F", 70], ["SLIKE_F", 37], ["SLIKE_SUB_F", 63],
  ["SPLASH_F", 49], ["UPOZORENJE_F", 80], ["USLUGE_F", 52], ["UVODNA", 47], ["ZAKAZIVANJE_F", 78], ["ZAPOSLENI_F", 67],
];

const Notepad = () => <S w={18}><path d="M3 1h13l-1 14H1z" fill="#d3eef0" stroke="#6fa4ad" /><path d="M3 2.500h13" stroke="#56707a" strokeWidth="2" strokeDasharray="1 1" /><path d="M3 6h11M3 8.500h11M3 11h10" stroke="#7cc0c8" /><path d="M14 15l3-12" stroke="#c9ac6a" /></S>;
const VsSquare = () => <S><path d="M0 0h16v16H0z" fill="#68217a" /><path d="M3 5.500v5l2 1 3-2.500 4 4 2-1V4l-2-1-4 4-3-2.500zM4.500 7l1.500 1-1.500 1zM11.500 6v4L9 8z" fill="#fff" fillRule="evenodd" /></S>;
const VsMark = () => <S><path d="M0 4v8l2.500 1.500L7 10l5 6 4-2V2l-4-2-5 6-4.500-3.500zM2.500 6l2 2-2 2zM12 5v6L9 8z" fill="#5c2474" stroke="#d9c3ea" strokeWidth=".8" fillRule="evenodd" /></S>;
const Calc = () => <S><rect x="3" y="0" width="11" height="16" rx="1" fill="#e6edf4" stroke="#7c93aa" /><path d="M5 2h7v3H5z" fill="#b8d7ea" /><path d="M5 8h4M5 11h4M5 14h4" stroke="#8296ab" strokeWidth="1.500" strokeDasharray="1.500 1" /><path d="M10 10h3v4h-3z" fill="#ef9b3b" /></S>;
const Infinity8 = () => <S><path d="M8 8Q4 3.500 2 6t0 5 6-3q4-5 6-2t0 5-6-3z" stroke="#5b3a9c" strokeWidth="2" /><path d="M8 8Q4 3.500 2 6t0 5" stroke="#3a6fb0" strokeWidth="2" /></S>;
const Outlook = () => <S w={18}><path d="M8 4h9v10H8z" fill="#fff" stroke="#0a6dbd" /><path d="M9 6l4 4 4-4" stroke="#0a6dbd" /><path d="M0 1.500L11 0v17L0 15z" fill="#0b6fc2" /><ellipse cx="5.500" cy="8.500" rx="2.300" ry="3" stroke="#fff" strokeWidth="1.600" /></S>;
const Office = ({ c, t }) => <S w={18}><path d="M8 3h9v11H8z" fill="#fff" stroke={c} /><path d="M12 5.500h4M12 8.500h4M12 11.500h4" stroke={c} strokeWidth="1.500" /><path d="M0 1.500L11 0v17L0 15z" fill={c} /><text x="2" y="12.500" fontFamily="Open Sans" fontWeight="800" fontSize="10" fill="#fff" textLength="7.500" lengthAdjust="spacingAndGlyphs">{t}</text></S>;
const Chrome = () => <S><circle cx="8" cy="8" r="7.500" fill="#f4c927" /><path d="M8 8L1.400 4.200A7.500 7.500 0 0 1 15 5z" fill="#db3a2b" /><path d="M8 8L1.400 4.200A7.500 7.500 0 0 0 7.500 15.500z" fill="#35a145" /><circle cx="8" cy="8" r="3.600" fill="#fff" /><circle cx="8" cy="8" r="2.700" fill="#3b82dc" /></S>;
const Explorer = () => <S><path d="M0 2h6l1 1h8v11H0z" fill="#f2da86" stroke="#c7a548" /><path d="M2 5h13v9H2z" fill="#fbeeb4" /><path d="M3.500 15.500v-5q5-3 9 0v5" stroke="#5aa9d9" strokeWidth="2" /></S>;
const GitHub = () => <S><circle cx="8" cy="8" r="7.500" fill="#f5f1fa" stroke="#8a77ac" /><path d="M3 4l3 1h4l3-1q1 8-2 8.500H5Q2 12 3 4z" fill="#3f1f63" /></S>;
const Paint = () => <S><path d="M0 10q0-6 7-6t5 4-3 3-3 3-6-4z" fill="#eaf2f8" stroke="#7e9bb3" /><circle cx="3.500" cy="10" r="1.500" fill="#d33" /><circle cx="7.500" cy="6.500" r="1.500" fill="#e8b428" /><circle cx="4" cy="7" r="1.200" fill="#3a3" /><circle cx="6.500" cy="11.500" r="1.300" fill="#36c" /><path d="M12.500 5v10" stroke="#e78a2a" strokeWidth="2" /><path d="M10 0h5l-1 5h-3z" fill="#c48a4c" /></S>;
const StartOrb = () => (
  <S w={38} h={38}>
    <circle cx="19" cy="19" r="17.500" fill="url(#orb)" stroke="#173e57" /><circle cx="19" cy="19" r="16.500" stroke="#a5cbe0" strokeOpacity=".7" />
    <path d="M10 10q4-3 9 0l-2 8q-4-3-9 0z" fill="#ea5b26" /><path d="M20 10q4 3 11 1l-2 8q-5 2-11-1z" fill="#8cc63f" />
    <path d="M8 19q4-3 9 0l-2 8q-4-3-9 0z" fill="#3fa1e0" /><path d="M18 19q5 3 10 1l-2 8q-5 2-10-1z" fill="#ffd23c" />
  </S>
);

const TrayIcons = () => (
  <S w={140} h={24}>
    <path d="M1 15h8l-4-4z" fill="#fff" />
    <path d="M23.500 4v15" stroke="#fff" strokeWidth="1.500" /><path d="M25 5h6l1 1.500h5l-2 3 1 2h-6l-1-1.500h-4z" fill="#fff" />
    <rect x="45" y="5" width="16" height="14" fill="#c9102f" /><path d="M51 16q-2-5 5-9 2 5-4 9zM48 17q0-8 6-11M57 8q2 6-5 9" stroke="#fff" strokeWidth="1.200" />
    <path d="M78 6.500h-2v-2h-3v2h-2.500v12h5" stroke="#fff" strokeWidth="1.300" /><path d="M75 9h8v4q-1 2-2.500 2v4h-3v-4q-2.500 0-2.500-2z" fill="#fff" /><path d="M77 6v3M81 6v3" stroke="#fff" strokeWidth="1.500" />
    <path d="M94.500 19v-3M97.500 19v-4M100.500 19v-7M103.500 19v-10M107.500 19V6" stroke="#5c7690" strokeWidth="2" /><path d="M101 12l8 7m0-7l-8 7" stroke="#e02020" strokeWidth="2" />
    <path d="M118 9h3l4-4v14l-4-4h-3z" fill="#fff" /><path d="M127 9q2 3 0 6M129.500 7q3 5 0 10" stroke="#fff" />
  </S>
);

const Small = ({ icon, w, off, children, caret }) => (
  <SmallItem $off={off}>{icon}<Fit w={w}>{children}</Fit>{caret && <Caret $c="#aaa8ac" />}</SmallItem>
);

export default function App() {
  return (
    <Screen>
      <Global />
      <Defs />
      <TopArea>
        <TitleRow>
          <QuickBar><QuickIcons /></QuickBar>
          <WindowButtons>
            <WinBtn $w={28}><MinGlyph /></WinBtn><WinBtn $w={27}><RestoreGlyph /></WinBtn><WinBtn $w={48} $close><CloseGlyph /></WinBtn>
          </WindowButtons>
        </TitleRow>
        <AppTitle><Fit w={90}>Microsoft Access</Fit></AppTitle>
        <ContextBand><Fit w={97}>Form Design Tools</Fit></ContextBand>
        <TabRow>
          <Tab $w={56} $file><Fit w={18}>File</Fit></Tab>
          <Tab $w={64}><Fit w={30}>Home</Fit></Tab>
          <Tab $w={55}><Fit w={33}>Create</Fit></Tab>
          <Tab $w={102}><Fit w={68}>External Data</Fit></Tab>
          <Tab $w={100}><Fit w={78}>Database Tools</Fit></Tab>
          <Tab $w={74}><Fit w={40}>Add-Ins</Fit></Tab>
          <Tab $w={62} $active><Fit w={36}>Design</Fit></Tab>
          <Tab $w={71}><Fit w={41}>Arrange</Fit></Tab>
          <Tab $w={61}><Fit w={36}>Format</Fit></Tab>
          <TabTools>
            <S w={10} h={18}><path d="M1 9l4-4 4 4v2H7L5 9.500 3 11H1z" fill="#fff" stroke="#555" /></S>
            <S w={16} h={16}><circle cx="8" cy="8" r="7.500" fill="url(#blueball)" stroke="#2f5fa8" /><text x="4.600" y="12.500" fontFamily="Open Sans" fontWeight="700" fontSize="13" fill="#fff">?</text></S>
          </TabTools>
        </TabRow>
      </TopArea>

      <Ribbon>
        <Group $w={50}>
          <GroupBody><BigButton $w={48}><ViewBig /><BigText><Fit w={25}>View</Fit><Caret $mt={5} /></BigText></BigButton></GroupBody>
          <GroupName><Fit w={30}>Views</Fit></GroupName>
        </Group>
        <Group $w={120}>
          <GroupBody>
            <BigButton $w={51} $top={5} $off><ThemesBig /><BigText $mt={4}><Fit w={38}>Themes</Fit><Caret $mt={5} $c="#b5b3b7" /></BigText></BigButton>
            <SmallList $pad="13px 0 0 0" $gap={13}>
              <Small icon={<ColorsIcon />} w={33} off caret>Colors</Small>
              <Small icon={<FontsIcon />} w={29} off caret>Fonts</Small>
            </SmallList>
          </GroupBody>
          <GroupName><Fit w={38}>Themes</Fit></GroupName>
        </Group>
        <Group $w={914}>
          <GroupBody $pad={6}>
            <Gallery>
              {controls.map((g, i) => <GalleryCell key={i} $on={i === 0}><S w={40}>{g}</S></GalleryCell>)}
              <GalleryScroll>
                <ScrollStep $off><S w={6} h={3}><path d="M0 3h6L3 0z" fill="#c3c5c9" /></S></ScrollStep>
                <ScrollStep><Caret /></ScrollStep>
                <ScrollStep><Bar /><Caret /></ScrollStep>
              </GalleryScroll>
            </Gallery>
            <BigButton $w={48}><InsertImageBig /><BigText><Fit w={29}>Insert</Fit><Line><Fit w={31}>Image</Fit><Caret /></Line></BigText></BigButton>
          </GroupBody>
          <GroupName><Fit w={44}>Controls</Fit></GroupName>
        </Group>
        <Group $w={108}>
          <GroupBody>
            <SmallList $pad="5px 0 0 8px" $gap={6}>
              <Small icon={<LogoIcon />} w={26}>Logo</Small>
              <Small icon={<TitleIcon />} w={21}>Title</Small>
              <Small icon={<DateIcon />} w={73}>Date and Time</Small>
            </SmallList>
          </GroupBody>
          <GroupName><Fit w={81}>Header / Footer</Fit></GroupName>
        </Group>
        <Group $w={388} $last>
          <GroupBody $pad={6}>
            <BigButton $w={65} $top={5}><AddFieldsBig /><BigText $mt={4}><Fit w={64}>Add Existing</Fit><Fit w={30}>Fields</Fit></BigText></BigButton>
            <BigButton $w={53} $top={5}><PropertyBig /><BigText $mt={4}><Fit w={43}>Property</Fit><Fit w={29}>Sheet</Fit></BigText></BigButton>
            <BigButton $w={36} $top={5}><TabOrderBig /><BigText $mt={4}><Fit w={18}>Tab</Fit><Fit w={30}>Order</Fit></BigText></BigButton>
            <SmallList $pad="5px 0 0 7px" $gap={6}>
              <Small icon={<SubformIcon />} w={130} off>Subform in New Window</Small>
              <Small icon={<CodeIcon />} w={55}>View Code</Small>
              <Small icon={<ConvertIcon />} w={195} off>Convert Form's Macros to Visual Basic</Small>
            </SmallList>
          </GroupBody>
          <GroupName><Fit w={27}>Tools</Fit></GroupName>
        </Group>
      </Ribbon>
      <RibbonEdge />

      <Message $mb={1}>
        <MessageIcon><Shield /></MessageIcon>
        <MessageTitle><Fit w={89}>Security Warning</Fit></MessageTitle>
        <Fit w={317}>Some active content has been disabled. Click for more details.</Fit>
        <MessageButton $w={112}><Fit w={80}>Enable Content</Fit></MessageButton>
        <Dismiss><CloseX /></Dismiss>
      </Message>
      <Message $mb={3}>
        <MessageIcon><Info /></MessageIcon>
        <MessageTitle><Fit w={54}>Read-Only</Fit></MessageTitle>
        <Fit w={718}>This database has been opened read-only. You can only change data in linked tables. To make design changes, save a copy of the database.</Fit>
        <MessageButton $w={82}><Fit w={50}>Save As ...</Fit></MessageButton>
        <Dismiss><CloseX /></Dismiss>
      </Message>

      <Work>
        <NavPane>
          <NavHead>
            <Fit w={36}>Forms</Fit>
            <HeadTools>
              <S w={14}><circle cx="7" cy="7" r="6" fill="#eceef2" stroke="#7b818c" /><path d="M3.500 5.500h7L7 9z" fill="#4c5568" /></S>
              <HeadRule />
              <S w={10}><path d="M4.500 1.500L1 5l3.500 3.500M8.500 1.500L5 5l3.500 3.500" stroke="#4c4f56" strokeWidth="1.200" /></S>
            </HeadTools>
          </NavHead>
          <NavList>
            {forms.map(([name, w]) => (
              <NavRow key={name} $on={name === "SEARCHLEKARA_F"}><FormIcon /><Fit w={w}>{name}</Fit></NavRow>
            ))}
          </NavList>
        </NavPane>
        <Splitter />
        <Canvas>
          <FormWindow>
            <FormTitle>
              <FormIcon w={16} h={15} /><Fit w={97}>SEARCHLEKARA_F</Fit>
              <FormButtons>
                <S w={82} h={12}>
                  <rect x=".5" y="5.500" width="10" height="4" rx="1" fill="#fff" stroke="#4d4f66" />
                  <rect x="35.500" y="1.500" width="10" height="8" fill="#fff" stroke="#4d4f66" /><rect x="38.500" y="4.500" width="4" height="2" stroke="#4d4f66" />
                  <path d="M70.500 1.500h3l2 2 2-2h3v2l-2.500 2 2.500 2v2h-3l-2-2-2 2h-3v-2l2.500-2-2.500-2z" fill="#fff" stroke="#4d4f66" />
                </S>
              </FormButtons>
            </FormTitle>
            <Frame>
              <Designer>
                <Corner><CornerDot /></Corner>
                <RulerTop><TopRuler /></RulerTop>
                <RulerSide>
                  <SectionStub /><SectionStub />
                  <SideRuler h={310} max={32} />
                  <SectionStub />
                  <SideRuler h={34} max={3} />
                </RulerSide>
                <Sections>
                  <SectionBar $mt={1}><SectionArrow /><Fit w={66}>Form Header</Fit></SectionBar>
                  <SectionBar $open><SectionArrow /><Fit w={30}>Detail</Fit></SectionBar>
                  <Detail>
                    <Grid />
                    <Control $x={14} $y={22} $w={387} $h={20} $bg="#b0e0e6"><Fit w={51}>Unbound</Fit></Control>
                    <Control $x={13} $y={62} $w={388} $h={218} $bg="#4682b4" $sunken><Fit w={51}>Unbound</Fit></Control>
                    <Control $x={306} $y={286} $w={95} $h={19} $right><Fit w={50}>Unbound</Fit></Control>
                  </Detail>
                  <SectionBar $open $mt={1}><SectionArrow /><Fit w={63}>Form Footer</Fit></SectionBar>
                </Sections>
              </Designer>
              <VScroll>
                <ScrollPiece $w={15} $h={17} $v><Arrow d="M0 7h10L5 2z" /></ScrollPiece>
                <ScrollPiece $w={15} $h={253} $v><Grip v /></ScrollPiece>
                <ScrollPiece $w={15} $h={17} $v $end><Arrow d="M0 3h10L5 8z" /></ScrollPiece>
              </VScroll>
              <HScroll>
                <ScrollPiece $w={17} $h={15}><Arrow d="M6 0v10L1 5z" /></ScrollPiece>
                <ScrollPiece $w={342} $h={15}><Grip /></ScrollPiece>
                <ScrollPiece $w={17} $h={15} $endx><Arrow d="M3 0v10l5-5z" /></ScrollPiece>
              </HScroll>
            </Frame>
          </FormWindow>
        </Canvas>
      </Work>

      <Status>
        <StatusLeft><Fit w={64}>Design View</Fit></StatusLeft>
        <StatusRule />
        <StatusRight>
          <Fit w={50}>Num Lock</Fit>
          <ViewIcons>
            <StatusRule />
            <S w={12}><rect x=".5" y="1.500" width="11" height="9" fill="#f2f3f4" stroke="#4c4f55" /><path d="M0 2.500h12M2 6.500h4M2 8.500h4M7 5.500h3v3H7" stroke="#4c4f55" /></S>
            <S w={12}><rect x=".5" y="1.500" width="11" height="9" fill="#f2f3f4" stroke="#4c4f55" /><path d="M0 2.500h12M3.500 3v8M5 6.500h5M5 8.500h5" stroke="#4c4f55" /></S>
            <S w={12}><path d="M4.500 1.500h5v5h-5zM.5 4.500h7v6h-7zM4 4v6M0 7.500h8M7 1v6M4 4h6M9 10l2-4" stroke="#5c5f65" /></S>
            <S w={12}><path d="M1.500 9.500v-6h3v4h3v-6h2v8zM3 11.500h9" stroke="#5c5f65" /></S>
            <ActiveView><S w={12}><path d="M1 1v6h5zM5 5l6-4M0 9.500h11" stroke="#5a5540" strokeWidth="1.700" /></S></ActiveView>
          </ViewIcons>
        </StatusRight>
      </Status>

      <Taskbar>
        <Streak><svg width="110" height="29"><path d="M22 0q22 10 42 29h16Q62 9 42 0z" fill="#cdeefb" opacity=".75" /></svg></Streak>
        <Orb><StartOrb /></Orb>
        <Tasks>
          <Task $open $stack><Notepad /></Task>
          <Task><VsSquare /></Task>
          <Task><VsMark /></Task>
          <Task $open><Calc /></Task>
          <Task><Infinity8 /></Task>
          <Task $open><Outlook /></Task>
          <Task><Office c="#1f7244" t="X" /></Task>
          <Task><Office c="#2a5699" t="W" /></Task>
          <Task $open><Chrome /></Task>
          <Task $open $stack><Explorer /></Task>
          <Task $open $active><AccessLogo /></Task>
          <Task $open><GitHub /></Task>
          <Task $open><Paint /></Task>
        </Tasks>
        <Tray>
          <Lang><Fit w={15}>EN</Fit></Lang>
          <TrayIcons />
          <Clock><Fit w={28}>16:13</Fit></Clock>
          <ShowDesktop />
        </Tray>
      </Taskbar>
    </Screen>
  );
}
